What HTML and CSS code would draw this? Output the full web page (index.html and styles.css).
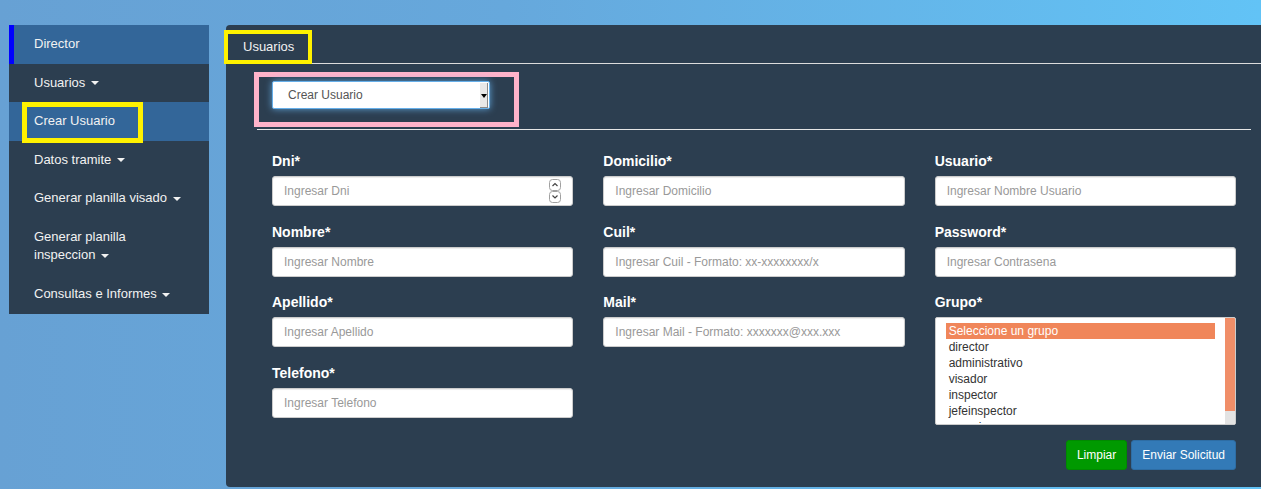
FILE: index.html
```html
<!DOCTYPE html>
<html lang="es">
<head>
<meta charset="utf-8">
<title>Crear Usuario</title>
<link rel="stylesheet" href="styles.css">
</head>
<body>
<div class="page">
  <nav class="sidebar">
    <a class="nav-item is-brand">Director</a>
    <a class="nav-item">Usuarios <span class="caret"></span></a>
    <a class="nav-item is-active is-marked">Crear Usuario</a>
    <a class="nav-item">Datos tramite <span class="caret"></span></a>
    <a class="nav-item">Generar planilla visado <span class="caret"></span></a>
    <a class="nav-item">Generar planilla inspeccion <span class="caret"></span></a>
    <a class="nav-item">Consultas e Informes <span class="caret"></span></a>
  </nav>

  <main class="panel">
    <div class="tabs">
      <span class="tab">Usuarios</span>
    </div>

    <div class="toolbar">
      <div class="select-wrap">
        <span class="select-text">Crear Usuario</span>
        <span class="select-arrow"></span>
      </div>
    </div>

    <div class="divider"></div>

    <form class="form">
      <div class="form-grid">
        <div class="form-col">
          <div class="group">
            <label class="label">Dni*</label>
            <div class="input-wrap">
              <input class="input" type="text" placeholder="Ingresar Dni">
              <svg class="spin" width="13" height="24" viewBox="0 0 13 24">
                <rect x="0.5" y="0.5" width="11" height="11" rx="3" fill="#fff" stroke="#a0a0a0"/>
                <rect x="0.5" y="12.5" width="11" height="11" rx="3" fill="#fff" stroke="#a0a0a0"/>
                <path d="M3.5 7 L6 4.5 L8.5 7" fill="none" stroke="#444" stroke-width="1.2"/>
                <path d="M3.5 16.5 L6 19 L8.5 16.5" fill="none" stroke="#444" stroke-width="1.2"/>
              </svg>
            </div>
          </div>
          <div class="group">
            <label class="label">Nombre*</label>
            <input class="input" type="text" placeholder="Ingresar Nombre">
          </div>
          <div class="group">
            <label class="label">Apellido*</label>
            <input class="input" type="text" placeholder="Ingresar Apellido">
          </div>
          <div class="group">
            <label class="label">Telefono*</label>
            <input class="input" type="text" placeholder="Ingresar Telefono">
          </div>
        </div>

        <div class="form-col">
          <div class="group">
            <label class="label">Domicilio*</label>
            <input class="input" type="text" placeholder="Ingresar Domicilio">
          </div>
          <div class="group">
            <label class="label">Cuil*</label>
            <input class="input" type="text" placeholder="Ingresar Cuil - Formato: xx-xxxxxxxx/x">
          </div>
          <div class="group">
            <label class="label">Mail*</label>
            <input class="input" type="text" placeholder="Ingresar Mail - Formato: xxxxxxx@xxx.xxx">
          </div>
        </div>

        <div class="form-col">
          <div class="group">
            <label class="label">Usuario*</label>
            <input class="input" type="text" placeholder="Ingresar Nombre Usuario">
          </div>
          <div class="group">
            <label class="label">Password*</label>
            <input class="input" type="text" placeholder="Ingresar Contrasena">
          </div>
          <div class="group group-last">
            <label class="label">Grupo*</label>
            <div class="listbox">
              <div class="list-items">
                <div class="option is-selected">Seleccione un grupo</div>
                <div class="option">director</div>
                <div class="option">administrativo</div>
                <div class="option">visador</div>
                <div class="option">inspector</div>
                <div class="option">jefeinspector</div>
                <div class="option">usuario</div>
              </div>
              <div class="scrollbar"><div class="scroll-thumb"></div></div>
            </div>
          </div>
        </div>
      </div>

      <div class="actions">
        <button type="button" class="btn btn-green">Limpiar</button>
        <button type="button" class="btn btn-blue">Enviar Solicitud</button>
      </div>
    </form>
  </main>
</div>
</body>
</html>
```

FILE: styles.css
```css
html, body {
  margin: 0;
  padding: 0;
  overflow: hidden;
}

body {
  width: 1261px;
  height: 489px;
  font-family: "Liberation Sans", Arial, Helvetica, sans-serif;
  background: linear-gradient(to right, #67a1d4 0%, #66a8dc 40%, #62c3f6 100%);
}

.page {
  display: flex;
  align-items: flex-start;
  padding-top: 25px;
}

/* Sidebar */
.sidebar {
  margin-left: 9px;
  width: 200px;
  flex-shrink: 0;
  background: #2c3e50;
  display: flex;
  flex-direction: column;
}

.nav-item {
  position: relative;
  display: block;
  padding: 10px 25px;
  font-size: 13px;
  line-height: 18.57px;
  color: #f2f2f2;
}

.nav-item.is-brand {
  background: #336699;
  box-shadow: inset 5px 0 0 #0000ff;
}

.nav-item.is-active {
  background: #336699;
}

.nav-item.is-marked::after {
  content: "";
  position: absolute;
  left: 13px;
  top: 0;
  width: 121px;
  height: 41px;
  box-sizing: border-box;
  border: 5px solid #fff200;
  z-index: 2;
}

.caret {
  display: inline-block;
  width: 0;
  height: 0;
  margin-left: 2px;
  vertical-align: middle;
  border-top: 4px solid #f2f2f2;
  border-left: 4px solid transparent;
  border-right: 4px solid transparent;
}

/* Panel */
.panel {
  margin-left: 17px;
  width: 1056px;
  flex-shrink: 0;
  background: #2c3e50;
  border-radius: 4px;
}

.tabs {
  display: flex;
  padding-top: 5px;
  border-bottom: 1px solid #dcdcdc;
  height: 33px;
}

.tab {
  position: relative;
  margin-left: -2px;
  margin-bottom: -1px;
  height: 34px;
  box-sizing: border-box;
  border: 4px solid #fff200;
  padding: 0 14px 0 15px;
  background: #2c3e50;
  font-size: 13px;
  line-height: 26px;
  color: #f2f2f2;
}

.toolbar {
  margin: 8px 0 0 28px;
  width: 265px;
  height: 55px;
  box-sizing: border-box;
  border: 5px solid #ffb3ca;
  padding: 4px 0 0 13px;
}

.select-wrap {
  display: flex;
  align-items: center;
  width: 218px;
  height: 28px;
  box-sizing: border-box;
  background: #fff;
  border: 1px solid #66afe9;
  border-radius: 2px;
  box-shadow: 0 0 7px rgba(102, 175, 233, 0.85);
}

.select-text {
  flex: 1;
  padding-left: 15px;
  font-size: 12px;
  color: #555;
}

.select-arrow {
  position: relative;
  width: 8px;
  height: 25px;
  margin-right: 1px;
  background: #e8e8e8;
  border-right: 1px solid #8a8a8a;
  border-bottom: 1px solid #8a8a8a;
  box-sizing: border-box;
}

.select-arrow::after {
  content: "";
  position: absolute;
  left: 1px;
  top: 11px;
  border-top: 4px solid #000;
  border-left: 3px solid transparent;
  border-right: 3px solid transparent;
}

.divider {
  height: 1px;
  margin: 2px 31px 0;
  background: #e6e6e6;
}

/* Form */
.form {
  padding: 21px 46px 17px;
}

.form-grid {
  display: grid;
  grid-template-columns: repeat(3, 1fr);
  column-gap: 30px;
}

.form-col {
  display: flex;
  flex-direction: column;
}

.group {
  display: flex;
  flex-direction: column;
  margin-bottom: 15.67px;
}

.group-last {
  margin-bottom: 15px;
}

.label {
  font-size: 14px;
  font-weight: bold;
  line-height: 20px;
  margin-bottom: 5px;
  color: #fff;
}

.input-wrap {
  position: relative;
}

.input {
  display: block;
  width: 100%;
  height: 30px;
  box-sizing: border-box;
  padding: 0 11px;
  font-family: inherit;
  font-size: 12px;
  color: #555;
  background: #fff;
  border: 1px solid #ccc;
  border-radius: 3px;
  box-shadow: inset 0 1px 1px rgba(0, 0, 0, 0.075);
}

.input::placeholder {
  color: #999;
}

.spin {
  position: absolute;
  right: 11px;
  top: 3px;
}

.listbox {
  display: flex;
  height: 108px;
  box-sizing: border-box;
  background: #fff;
  border: 1px solid #ccc;
  border-radius: 2px;
  overflow: hidden;
}

.list-items {
  flex: 1;
  min-width: 0;
  padding: 5px 10px;
  overflow: hidden;
}

.scrollbar {
  width: 10px;
  flex-shrink: 0;
  background: #e3e3e3;
}

.scroll-thumb {
  height: 93px;
  background: #f08e68;
}

.option {
  height: 16px;
  line-height: 16px;
  padding-left: 3px;
  font-size: 12px;
  color: #333;
  white-space: nowrap;
}

.option.is-selected {
  background: #f0865a;
  color: #fff;
}

.actions {
  display: flex;
  justify-content: flex-end;
  gap: 4px;
}

.btn {
  height: 30px;
  padding: 0 10px;
  font-family: inherit;
  font-size: 12px;
  color: #fff;
  border-radius: 3px;
  border: 1px solid transparent;
}

.btn-green {
  background: #009900;
  border-color: #008a00;
}

.btn-blue {
  background: #337ab7;
  border-color: #2e6da4;
}
```
